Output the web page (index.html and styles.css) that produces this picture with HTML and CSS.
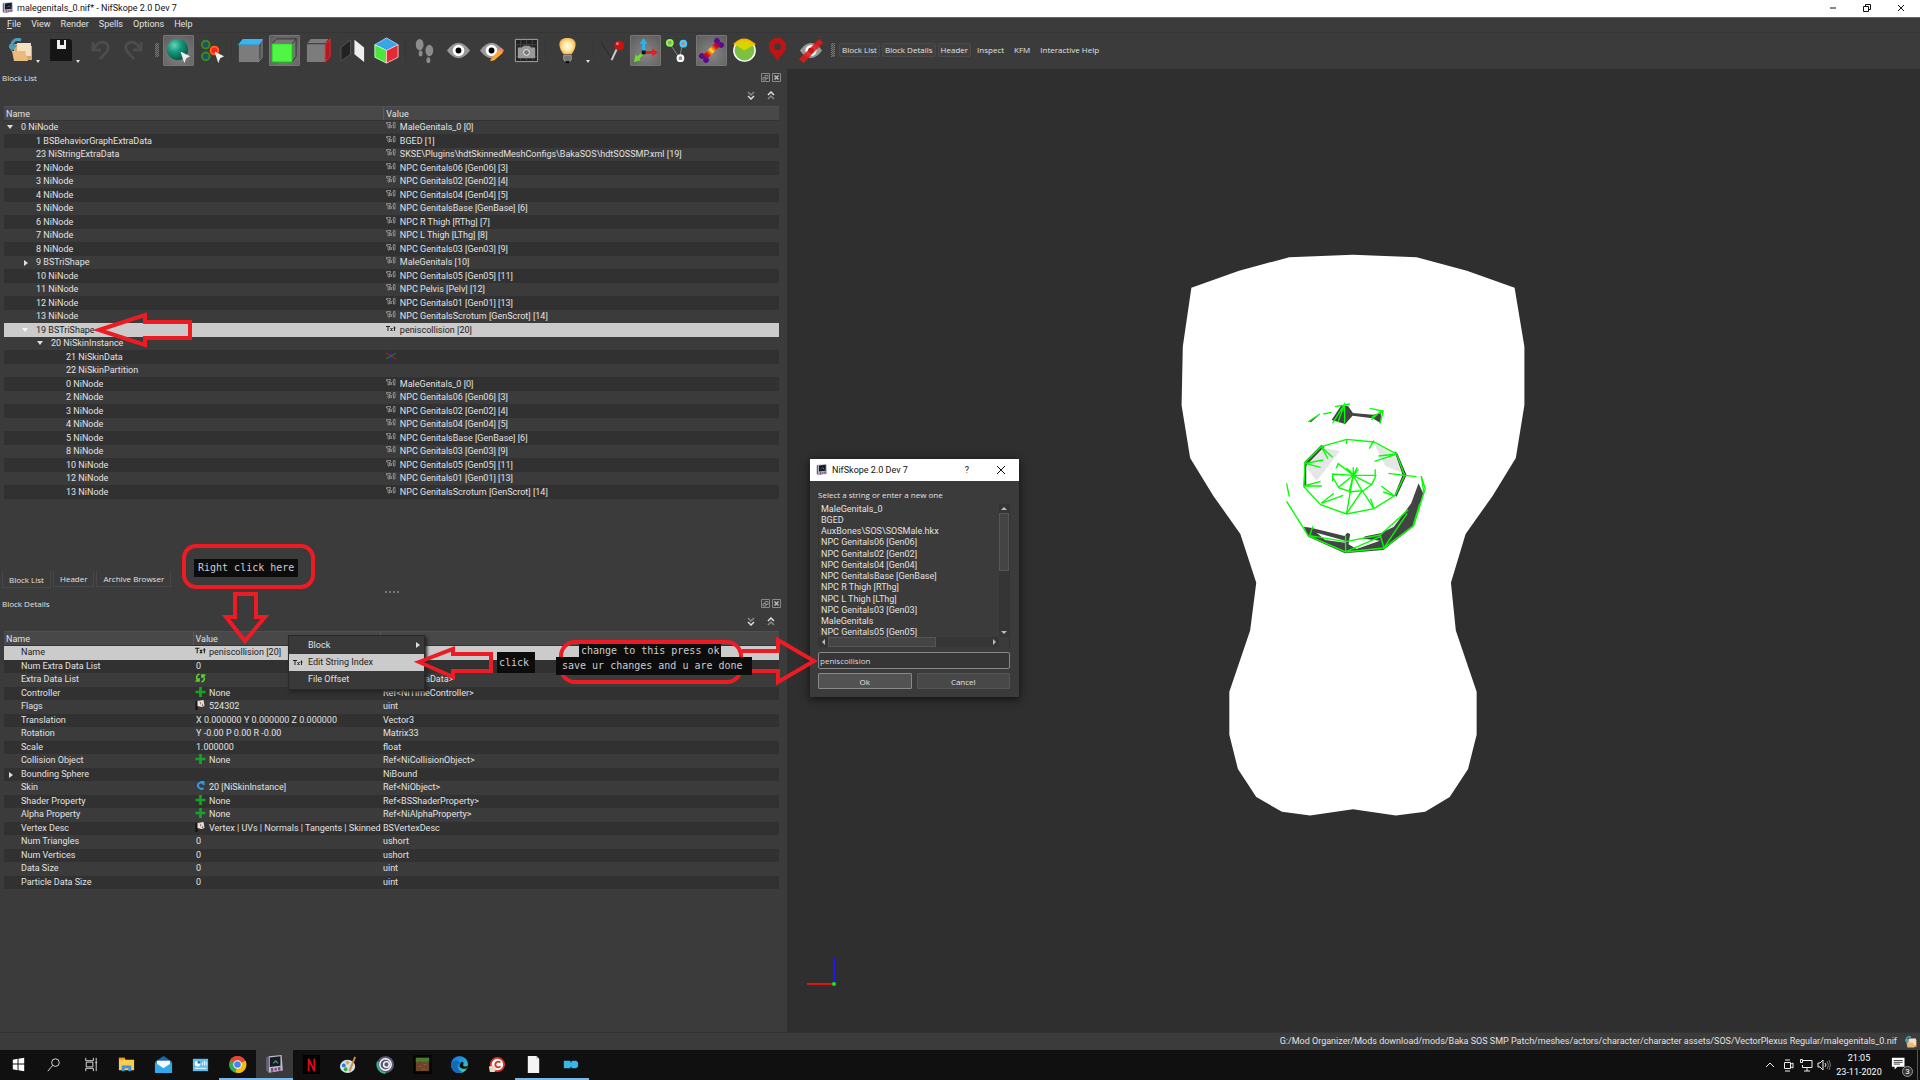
FILE: index.html
```html
<!DOCTYPE html>
<html lang="en">
<head>
<meta charset="utf-8">
<title>NifSkope 2.0 Dev 7</title>
<link rel="stylesheet" href="styles.css">
</head>
<body>
<svg class="defs" aria-hidden="true">
  <defs>
    <radialGradient id="ball" cx=".35" cy=".3" r=".8"><stop offset="0" stop-color="#6fd0b4"/><stop offset=".4" stop-color="#159a7d"/><stop offset="1" stop-color="#034a3b"/></radialGradient>
    <radialGradient id="glow"><stop offset="0" stop-color="#fffbe8"/><stop offset=".6" stop-color="#ffe4a0"/><stop offset="1" stop-color="#f3b64c"/></radialGradient>
    <linearGradient id="heat"><stop offset="0" stop-color="#5b0a8a"/><stop offset=".25" stop-color="#e01010"/><stop offset=".5" stop-color="#ffe020"/><stop offset=".75" stop-color="#e01010"/><stop offset="1" stop-color="#5b0a8a"/></linearGradient>
    <linearGradient id="edge" x2="1" y2="1"><stop offset="0" stop-color="#1b6fd0"/><stop offset=".5" stop-color="#1f9fe0"/><stop offset="1" stop-color="#5fe08a"/></linearGradient>
  </defs>
  <symbol id="txt" viewBox="0 0 10 8"><path d="M0 1.500h4M2 1.500V6M4.500 3l2 3M6.500 3l-2 3M8.500 1.500V6M7.500 3h2" fill="none" stroke="currentColor"/></symbol>
  <symbol id="txt-o" viewBox="0 0 10 8"><path d="M.5.5h4v1.500h-1v4h-1.500v-4H.5zM4 3l2 3M6 3L4.500 6M6.500 2.500h1v-2H9v2h.5M9 3v3H7.500V3" fill="none" stroke="#9a9a9a" stroke-width=".8"/></symbol>
  <symbol id="plus" viewBox="0 0 11 11"><path d="M4 0h3v4h4v3H7v4H4V7H0V4h4z" fill="#12a522"/></symbol>
  <symbol id="flag" viewBox="0 0 10 10"><path d="M1 1v9" stroke="#111" stroke-width="2"/><path d="M2 1l6-1 1 6-3 1-4-1z" fill="#e8e4e0"/><path d="M4 1l2 2-1 2zM7 3l1 3H6z" fill="#a5746a"/></symbol>
  <symbol id="cycle" viewBox="0 0 10 10"><path d="M4 1C1 2 0 5 2.500 7.500M0 8h3.500V5M6 9c3-1 4-4 1.500-6.500M10 2H6.500v3" fill="none" stroke="#5ed32e" stroke-width="1.600"/></symbol>
  <symbol id="link" viewBox="0 0 10 10"><path d="M7 2C3 0 1 5 4 7c2 2 4 0 4 0M5 1h3v3" fill="none" stroke="#2e9ce0" stroke-width="2"/></symbol>
  <symbol id="app" viewBox="0 0 16 16"><path d="M3 1l11-1 1 13-12 2z" fill="#bdb8cf"/><path d="M1 2l2-1v14l-2-2z" fill="#68627f"/><path d="M4 2l9-1v8l-9 1z" fill="#151c22"/><path d="M7 7l2-2 2 2" stroke="#3fae60" fill="none"/><path d="M5 11h2v3H5zM8 11h2v2H8zM11 10h2v3h-2z" fill="#7a4a78"/></symbol>
  <symbol id="cursor" viewBox="0 0 10 12"><path d="M0 0l10 5-4 2-2 5z" fill="#eee"/></symbol>
  <symbol id="folder" viewBox="0 0 24 24"><path d="M5 6h7l2 2h9v14H5z" fill="#d9a866"/><path d="M8 5h14v13H8z" fill="#f2dfc4"/><path d="M3 13h13l3 10H5z" fill="#e9bb7c"/><path d="M12 2C6 0 2 4 3 9M0 7l3 4 4-4" stroke="#4a9fb8" stroke-width="3" fill="none"/></symbol>
  <symbol id="eye" viewBox="0 0 24 18"><path d="M0 9Q12-7 24 9 12 25 0 9z" fill="#999"/><circle cx="12" cy="9" r="6" fill="#fff"/><circle cx="12" cy="9" r="3" fill="#000"/></symbol>
  <symbol id="float" viewBox="0 0 9 9"><path d="M.5.5h8v8h-8zM4 2.500h3v3H4zM2 4.500h3v2.500H2z" fill="none" stroke="#888"/></symbol>
  <symbol id="close" viewBox="0 0 9 9"><path d="M.5.5h8v8h-8z" fill="none" stroke="#888"/><path d="M2.500 2.500l4 4M6.500 2.500l-4 4" stroke="#bbb" stroke-width="1.500"/></symbol>
  <symbol id="up2" viewBox="0 0 8 9"><path d="M1 4l3-3 3 3" fill="none" stroke="#ddd" stroke-width="1.500"/><path d="M1 8l3-3 3 3" fill="none" stroke="#888" stroke-width="1.500"/></symbol>
  <symbol id="down2" viewBox="0 0 8 9"><path d="M1 1l3 3 3-3" fill="none" stroke="#888" stroke-width="1.500"/><path d="M1 5l3 3 3-3" fill="none" stroke="#ddd" stroke-width="1.500"/></symbol>
</svg>

<header class="titlebar">
  <svg class="i12"><use href="#app"/></svg><h1>malegenitals_0.nif* - NifSkope 2.0 Dev 7</h1>
  <div class="window-buttons">
    <button aria-label="Minimize"><svg viewBox="0 0 8 8"><path d="M1 4h6" stroke="#111"/></svg></button>
    <button aria-label="Restore"><svg viewBox="0 0 8 8"><path d="M.5 2.500h5v5h-5zM2.500 2V.5h5v5H6" fill="none" stroke="#111"/></svg></button>
    <button aria-label="Close"><svg viewBox="0 0 8 8"><path d="M1 1l6 6M7 1L1 7" stroke="#111"/></svg></button>
  </div>
</header>
<nav class="menubar">
  <button><u>F</u>ile</button><button>View</button><button>Render</button><button>Spells</button><button>Options</button><button>Help</button>
</nav>
<div class="toolbar" role="toolbar">
  <div class="group files">
    <button aria-label="Open"><svg class="i24"><use href="#folder"/></svg><i class="drop"></i></button>
    <button aria-label="Save"><svg class="i24" viewBox="0 0 24 24"><path d="M1 1h20l2 2v20H1z" fill="#151515"/><path d="M8 2h9v9H8z" fill="#eee"/><path d="M11 2h4v5h-4z" fill="#151515"/></svg><i class="drop"></i></button>
    <button aria-label="Undo"><svg class="i24" viewBox="0 0 24 24"><path d="M4 4v8h8M5 11C9 1 21 3 19 11c-1 4-5 6-8 10" fill="none" stroke="#4c4c4c" stroke-width="3"/></svg></button>
    <button aria-label="Redo"><svg class="i24" viewBox="0 0 24 24"><path d="M20 4v8h-8M19 11C15 1 3 3 5 11c1 4 5 6 8 10" fill="none" stroke="#4c4c4c" stroke-width="3"/></svg></button>
  </div>
  <i class="grip"></i>
  <div class="group">
    <button class="on" aria-label="Select object"><svg viewBox="0 0 30 30"><circle cx="14" cy="14" r="11" fill="url(#ball)"/><use href="#cursor" x="17" y="16" width="10" height="12"/></svg></button>
    <button aria-label="Select vertex"><svg viewBox="0 0 30 30"><g fill="#1d5560" stroke="#3b8c1c" stroke-width="2"><circle cx="8" cy="9" r="4"/><circle cx="8" cy="21" r="4"/></g><circle cx="17" cy="15" r="4" fill="#f22" stroke="#f62" stroke-width="2"/><use href="#cursor" x="17" y="16" width="10" height="12"/></svg></button>
    <i class="sep"></i>
    <button aria-label="Top view"><svg viewBox="0 0 30 30"><path d="M3 9h20v18H3z" fill="#7c7c7c"/><path d="M23 9l4-5v18l-4 5z" fill="#555" stroke="#888"/><path d="M2 9l5-6h21l-4 6z" fill="#38b5f5"/></svg></button>
    <button class="on" aria-label="Front view"><svg viewBox="0 0 30 30"><path d="M2 8l5-5h20v18l-4 6" fill="#777" stroke="#333"/><path d="M2 8h21v19H2z" fill="#4ff644" stroke="#19b51c"/><path d="M23 8l4-5" stroke="#333"/></svg></button>
    <button aria-label="Side view"><svg viewBox="0 0 30 30"><path d="M3 8l4-5h19l-4 5v19H3z" fill="#7c7c7c"/><path d="M3 8h19l4-5" fill="none" stroke="#333"/><path d="M22 9l5-6v18l-5 6z" fill="#b51822" stroke="#f22"/></svg></button>
    <button aria-label="Flip view"><svg viewBox="0 0 30 30"><path d="M3 12l10-8v15L3 26z" fill="#222" stroke="#555"/><path d="M17 4l10 8v15l-10-8z" fill="#eee"/></svg></button>
    <button aria-label="Perspective"><svg viewBox="0 0 30 30"><path d="M3 9l12-7 12 7-12 6z" fill="#38a5e5" stroke="#9cf"/><path d="M3 9l12 6v13L3 22z" fill="#4ce63c" stroke="#bfb"/><path d="M27 9l-12 6v13l12-6z" fill="#e52a36" stroke="#fbb"/></svg></button>
    <i class="sep"></i>
    <button aria-label="Walk"><svg viewBox="0 0 30 30" fill="#8c8c8c"><ellipse cx="10" cy="9" rx="4" ry="6"/><ellipse cx="11" cy="18" rx="2" ry="3"/><ellipse cx="20" cy="15" rx="4" ry="6"/><ellipse cx="19" cy="25" rx="2" ry="3"/></svg></button>
    <button aria-label="Show"><svg viewBox="0 0 30 30"><use href="#eye" x="3" y="6" width="24" height="18"/></svg></button>
    <button aria-label="Edit view"><svg viewBox="0 0 30 30"><use href="#eye" x="2" y="6" width="24" height="18"/><path d="M13 24l9-10 4 3-9 8-4 1z" fill="#ffa62b"/><path d="M21 14l3-2 3 3-2 2z" fill="#f48080"/></svg></button>
    <button aria-label="Screenshot"><svg viewBox="0 0 30 30"><path d="M3.500 3.500h23v23h-23z" fill="#222" stroke="#aaa"/><path d="M9 4v22M15 4v22M21 4v22M4 9h22M4 21h22" stroke="#444"/><path d="M6 12h4l2-2h6l2 2h4v11H6z" fill="#999"/><circle cx="15" cy="17" r="3" fill="#777" stroke="#eee"/></svg></button>
    <i class="sep"></i>
    <button class="wide" aria-label="Lighting"><svg viewBox="0 0 30 30"><path d="M15 2c12 0 9 11 4 17h-8C6 13 3 2 15 2z" fill="url(#glow)"/><path d="M11 20h8v4l-2 3h-4l-2-3z" fill="#777" stroke="#999"/><path d="M13 26h4v2h-4z" fill="#000"/></svg><i class="drop"></i></button>
    <i class="sep"></i>
  </div>
  <div class="group tight">
    <button aria-label="Normals"><svg viewBox="0 0 30 30"><path d="M3 6l11 18" stroke="#2a2a2a"/><path d="M14 25l8-17" stroke="#ccc" stroke-width="2"/><circle cx="22" cy="10" r="5" fill="#c11"/><circle cx="20" cy="8" r="1.500" fill="#e77"/></svg></button>
    <button class="on" aria-label="Axes"><svg viewBox="0 0 30 30"><path d="M13 17V6" stroke="#2bb3f0" stroke-width="3"/><path d="M9 8l4-6 4 6z" fill="#2bb3f0"/><path d="M13 17h10" stroke="#e02020" stroke-width="3"/><path d="M22 13l6 4-6 4z" fill="#e02020"/><path d="M13 17l-7 7" stroke="#6fdc30" stroke-width="3"/><path d="M3 27l2-8 5 6z" fill="#6fdc30"/><path d="M11 15h4v4h-4z" fill="#111"/></svg></button>
    <button aria-label="Nodes"><svg viewBox="0 0 30 30"><path d="M6 8l10 15 3-14" fill="none" stroke="#888"/><g fill="#999" stroke-width="2"><circle cx="6" cy="7" r="3" stroke="#8f4"/><circle cx="20" cy="8" r="3" stroke="#4cf"/><circle cx="17" cy="23" r="3" stroke="#fff"/></g></svg></button>
    <button class="on" aria-label="Skeleton"><svg viewBox="0 0 30 30"><g transform="rotate(-45 15 15)"><g fill="#5b0a8a"><circle cx="4" cy="12" r="3"/><circle cx="4" cy="18" r="3"/><circle cx="26" cy="12" r="3"/><circle cx="26" cy="18" r="3"/></g><path d="M4 12h22v6H4z" fill="url(#heat)"/></g></svg></button>
    <button aria-label="Constraints"><svg viewBox="0 0 30 30"><circle cx="15" cy="15" r="11" fill="#7cc142" stroke="#fff" stroke-width="1.500"/><path d="M15 15L5 9q10-10 20 0z" fill="#d8d400"/><path d="M4 9q10-11 22 0" fill="none" stroke="#fa0" stroke-width="2"/></svg></button>
    <button aria-label="Markers"><svg viewBox="0 0 30 30"><path d="M15 27C13 19 6 17 6 10.500a9 8.500 0 0 1 18 0C24 17 17 19 15 27z" fill="#c11313"/><circle cx="15" cy="11" r="3.500" fill="#3b3b3b"/></svg></button>
    <button aria-label="Hidden"><svg viewBox="0 0 30 30"><use href="#eye" x="4" y="6" width="23" height="18"/><path d="M3 24L24 3l4 4L8 28z" fill="#e31a1a" opacity=".9"/></svg></button>
  </div>
  <i class="grip"></i>
  <div class="views">
    <button class="box">Block List</button><button class="box">Block Details</button><button class="box">Header</button><button>Inspect</button><button>KFM</button><button>Interactive Help</button>
  </div>
</div>

<main>
  <div class="docks">
    <section class="dock list">
      <div class="dock-title"><h2>Block List</h2><button aria-label="Float"><svg><use href="#float"/></svg></button><button aria-label="Close"><svg><use href="#close"/></svg></button></div>
      <div class="dock-tools"><button aria-label="Expand"><svg><use href="#down2"/></svg></button><button aria-label="Collapse"><svg><use href="#up2"/></svg></button></div>
      <table>
        <colgroup><col class="c-half"><col></colgroup>
        <thead><tr><th>Name</th><th>Value</th></tr></thead>
        <tbody>
          <tr><td class="l0 open">0 NiNode</td><td><svg><use href="#txt-o"/></svg>MaleGenitals_0 [0]</td></tr>
          <tr><td class="l1">1 BSBehaviorGraphExtraData</td><td><svg><use href="#txt-o"/></svg>BGED [1]</td></tr>
          <tr><td class="l1">23 NiStringExtraData</td><td><svg><use href="#txt-o"/></svg>SKSE\Plugins\hdtSkinnedMeshConfigs\BakaSOS\hdtSOSSMP.xml [19]</td></tr>
          <tr><td class="l1">2 NiNode</td><td><svg><use href="#txt-o"/></svg>NPC Genitals06 [Gen06] [3]</td></tr>
          <tr><td class="l1">3 NiNode</td><td><svg><use href="#txt-o"/></svg>NPC Genitals02 [Gen02] [4]</td></tr>
          <tr><td class="l1">4 NiNode</td><td><svg><use href="#txt-o"/></svg>NPC Genitals04 [Gen04] [5]</td></tr>
          <tr><td class="l1">5 NiNode</td><td><svg><use href="#txt-o"/></svg>NPC GenitalsBase [GenBase] [6]</td></tr>
          <tr><td class="l1">6 NiNode</td><td><svg><use href="#txt-o"/></svg>NPC R Thigh [RThg] [7]</td></tr>
          <tr><td class="l1">7 NiNode</td><td><svg><use href="#txt-o"/></svg>NPC L Thigh [LThg] [8]</td></tr>
          <tr><td class="l1">8 NiNode</td><td><svg><use href="#txt-o"/></svg>NPC Genitals03 [Gen03] [9]</td></tr>
          <tr><td class="l1 shut">9 BSTriShape</td><td><svg><use href="#txt-o"/></svg>MaleGenitals [10]</td></tr>
          <tr><td class="l1">10 NiNode</td><td><svg><use href="#txt-o"/></svg>NPC Genitals05 [Gen05] [11]</td></tr>
          <tr><td class="l1">11 NiNode</td><td><svg><use href="#txt-o"/></svg>NPC Pelvis [Pelv] [12]</td></tr>
          <tr><td class="l1">12 NiNode</td><td><svg><use href="#txt-o"/></svg>NPC Genitals01 [Gen01] [13]</td></tr>
          <tr><td class="l1">13 NiNode</td><td><svg><use href="#txt-o"/></svg>NPC GenitalsScrotum [GenScrot] [14]</td></tr>
          <tr class="sel"><td class="l1 open">19 BSTriShape</td><td><svg><use href="#txt"/></svg>peniscollision [20]</td></tr>
          <tr><td class="l2 open">20 NiSkinInstance</td><td></td></tr>
          <tr><td class="l3">21 NiSkinData</td><td><svg viewBox="0 0 10 10"><path d="M5 0v10" stroke="#22c"/><path d="M0 2l10 6" stroke="#a22"/><path d="M0 8l10-6" stroke="#282"/></svg></td></tr>
          <tr><td class="l3">22 NiSkinPartition</td><td></td></tr>
          <tr><td class="l3">0 NiNode</td><td><svg><use href="#txt-o"/></svg>MaleGenitals_0 [0]</td></tr>
          <tr><td class="l3">2 NiNode</td><td><svg><use href="#txt-o"/></svg>NPC Genitals06 [Gen06] [3]</td></tr>
          <tr><td class="l3">3 NiNode</td><td><svg><use href="#txt-o"/></svg>NPC Genitals02 [Gen02] [4]</td></tr>
          <tr><td class="l3">4 NiNode</td><td><svg><use href="#txt-o"/></svg>NPC Genitals04 [Gen04] [5]</td></tr>
          <tr><td class="l3">5 NiNode</td><td><svg><use href="#txt-o"/></svg>NPC GenitalsBase [GenBase] [6]</td></tr>
          <tr><td class="l3">8 NiNode</td><td><svg><use href="#txt-o"/></svg>NPC Genitals03 [Gen03] [9]</td></tr>
          <tr><td class="l3">10 NiNode</td><td><svg><use href="#txt-o"/></svg>NPC Genitals05 [Gen05] [11]</td></tr>
          <tr><td class="l3">12 NiNode</td><td><svg><use href="#txt-o"/></svg>NPC Genitals01 [Gen01] [13]</td></tr>
          <tr><td class="l3">13 NiNode</td><td><svg><use href="#txt-o"/></svg>NPC GenitalsScrotum [GenScrot] [14]</td></tr>
        </tbody>
      </table>
      <div class="tabs"><button class="current">Block List</button><button>Header</button><button>Archive Browser</button></div>
      <i class="splitter"></i>
    </section>
    <section class="dock details">
      <div class="dock-title"><h2>Block Details</h2><button aria-label="Float"><svg><use href="#float"/></svg></button><button aria-label="Close"><svg><use href="#close"/></svg></button></div>
      <div class="dock-tools"><button aria-label="Expand"><svg><use href="#down2"/></svg></button><button aria-label="Collapse"><svg><use href="#up2"/></svg></button></div>
      <table>
        <colgroup><col class="c-name"><col class="c-value"><col></colgroup>
        <thead><tr><th>Name</th><th>Value</th><th>Type</th></tr></thead>
        <tbody>
          <tr class="sel"><td class="l0">Name</td><td><svg><use href="#txt"/></svg>peniscollision [20]</td><td>string</td></tr>
          <tr><td class="l0">Num Extra Data List</td><td>0</td><td>uint</td></tr>
          <tr><td class="l0">Extra Data List</td><td><svg><use href="#cycle"/></svg></td><td>Ref&lt;NiExtraData&gt;</td></tr>
          <tr><td class="l0">Controller</td><td><svg><use href="#plus"/></svg>None</td><td>Ref&lt;NiTimeController&gt;</td></tr>
          <tr><td class="l0">Flags</td><td><svg><use href="#flag"/></svg>524302</td><td>uint</td></tr>
          <tr><td class="l0">Translation</td><td>X 0.000000 Y 0.000000 Z 0.000000</td><td>Vector3</td></tr>
          <tr><td class="l0">Rotation</td><td>Y -0.00 P 0.00 R -0.00</td><td>Matrix33</td></tr>
          <tr><td class="l0">Scale</td><td>1.000000</td><td>float</td></tr>
          <tr><td class="l0">Collision Object</td><td><svg><use href="#plus"/></svg>None</td><td>Ref&lt;NiCollisionObject&gt;</td></tr>
          <tr><td class="l0 shut">Bounding Sphere</td><td></td><td>NiBound</td></tr>
          <tr><td class="l0">Skin</td><td><svg><use href="#link"/></svg>20 [NiSkinInstance]</td><td>Ref&lt;NiObject&gt;</td></tr>
          <tr><td class="l0">Shader Property</td><td><svg><use href="#plus"/></svg>None</td><td>Ref&lt;BSShaderProperty&gt;</td></tr>
          <tr><td class="l0">Alpha Property</td><td><svg><use href="#plus"/></svg>None</td><td>Ref&lt;NiAlphaProperty&gt;</td></tr>
          <tr><td class="l0">Vertex Desc</td><td><svg><use href="#flag"/></svg>Vertex | UVs | Normals | Tangents | Skinned</td><td>BSVertexDesc</td></tr>
          <tr><td class="l0">Num Triangles</td><td>0</td><td>ushort</td></tr>
          <tr><td class="l0">Num Vertices</td><td>0</td><td>ushort</td></tr>
          <tr><td class="l0">Data Size</td><td>0</td><td>uint</td></tr>
          <tr><td class="l0">Particle Data Size</td><td>0</td><td>uint</td></tr>
        </tbody>
      </table>
    </section>
  </div>
  <div class="viewport">
    <svg viewBox="787 69 1133 963" aria-label="Mesh preview">
      <path transform="scale(1.2245)" fill="#fff" d="M973 235l39-14 41-11 52-2 52 2 41 11 39 14 8 48v48l-7 43-19 31-22 31-12 40 4 39 17 50v35l-7 28-15 23-20 12-24 3-35-5-35 5-23-3-21-12-15-23-7-28v-35l17-50 5-39-13-40-22-31-19-31-7-43 1-48z"/>
      <g transform="translate(1260 390) scale(.3333)">
        <path d="M134 215l50-50 10 6-55 60v55l-8 4zM404 185l8 4 28 66-30 65-6-5 24-60zM215 90l30-45 20 4 14 20 60 5 24-4v30l-25-15-60-8-22 25zM148 93l30-18-25 22zM132 410l24 4 98 24 8-10 16 8 24 6 60-12 40-20 52-70 22-60 14 30-30 100-90 70-115 10-110-50z" fill="#444"/>
        <path d="M140 225l50-52 50 10-70 90-30-40zM342 160l60 28 24 60-50-20z" fill="#e6e6e6"/>
        <path d="M170 428l86 24v6l-60-8zM272 424l48 6-10 16 50 6-70 25-24-14z" fill="#fff"/>
        <g fill="none" stroke="#0f0" stroke-width="4">
          <path d="M184 170l76-22 82 8 68 36 24 64-28 60-64 40-82 16-78-28-50-54 3-72zM260 370l20-114M342 356l-36-56"/>
          <path d="M280 256l-45-35-6 14M280 256l-62-4v22M280 256l-44 36-16-28M280 256l-12 48-34-12M280 256l26 46-40 4M280 256l54 28-26 20M280 256h70M346 238v24l-12 24M280 256l-20-22M280 256l12-24M280 256v-24M280 256l16-18M280 256l-12-16M260 370l48-70"/>
          <path d="M184 170l34 32M184 170l20 36M136 220l46 12M136 220l54-10M132 288l50-14M132 288l54 0M184 340l38-30M184 340l66-24M260 148v14M342 152l-14 24M342 152l-8 12M410 192l-66 22M410 192l-54 6M434 256l-48-6M434 256l36 4M404 318l-40-30M404 318l-34-12M342 356l-10-30"/>
          <path d="M80 280l8 40M80 334l65 103 112 49 115-12 90-68 34-110-12-38 8 50M150 437l107 18 104-20M257 486v-50M361 435l11 39M361 435l84-76M257 486l104-46M372 474l70-104M480 340l-20 65M149 437l10-28"/>
          <path d="M145 95l35-23M190 72l25-5M218 100l36-58v56M254 42l-20 55M225 50l45-8M330 55l40 8-10 38M335 82l35-20M335 90l20-20"/>
        </g>
      </g>
      <path d="M834 957v27" stroke="#1a1af0" stroke-width="2"/><path d="M807 984h26" stroke="#e01515" stroke-width="2"/><circle cx="834" cy="984" r="2" fill="#1e1"/>
    </svg>
  </div>
</main>
<footer class="status"><span>G:/Mod Organizer/Mods download/mods/Baka SOS SMP Patch/meshes/actors/character/character assets/SOS/VectorPlexus Regular/malegenitals_0.nif</span><svg class="i12"><use href="#folder"/></svg></footer>

<nav class="taskbar">
  <button aria-label="Start"><svg viewBox="0 0 20 20"><path d="M4 5l5-1v5H4zM10 4l6-1v6h-6zM4 10h5v6l-5-1zM10 10h6v7l-6-1z" fill="#fff"/></svg></button>
  <button aria-label="Search"><svg viewBox="0 0 20 20"><circle cx="11" cy="8" r="4" fill="none" stroke="#ddd"/><path d="M8 11l-5 6" stroke="#ddd"/></svg></button>
  <button aria-label="Task view"><svg viewBox="0 0 20 20"><path d="M5 3v3h8V3M5 17v-3h8v3M5.500 7.500h7v5h-7zM16 3v14M15 8h2" fill="none" stroke="#ddd"/></svg></button>
  <button aria-label="Explorer"><svg viewBox="0 0 20 20"><path d="M2 3h6l1 2h9v11H2z" fill="#ffcb4c"/><path d="M2 3h6v2H2z" fill="#e29d25"/><path d="M5 17v-6h10v6h-3v-3H8v3z" fill="#3a94df"/></svg></button>
  <button aria-label="Mail"><svg viewBox="0 0 20 20"><path d="M1 7l9-6 9 6v12H1z" fill="#1469b5"/><path d="M3 6h14v8H3z" fill="#f5f9ff"/><path d="M1 8l9 6 9-6v11H1z" fill="#35a8ea"/></svg></button>
  <button aria-label="Control panel"><svg viewBox="0 0 20 20"><path d="M2 4h16v13H2z" fill="#60bdf3"/><circle cx="7" cy="9" r="3" fill="#fff"/><path d="M7 9V6a3 3 0 0 1 3 3z" fill="#1668b0"/><path d="M12 11V8M14 11V6M16 11V7M4 14h12" stroke="#fff"/></svg></button>
  <button class="run" aria-label="Chrome"><svg viewBox="0 0 20 20"><circle cx="10" cy="10" r="9" fill="#38a852"/><path d="M10 10L2 6a9 9 0 0 1 16 0z" fill="#e94335"/><path d="M10 10l8.500-4A9 9 0 0 1 10 19l-2-1z" fill="#fabc05"/><circle cx="10" cy="10" r="4.500" fill="#fff"/><circle cx="10" cy="10" r="3.500" fill="#4285f4"/></svg></button>
  <button class="run active" aria-label="NifSkope"><svg><use href="#app"/></svg></button>
  <button aria-label="Netflix"><svg viewBox="0 0 20 20"><path d="M1 0h18v20H1z" fill="#000"/><path d="M7 17V4l6 13V4" fill="none" stroke="#d8091a" stroke-width="2"/></svg></button>
  <button aria-label="Paint"><svg viewBox="0 0 20 20"><ellipse cx="9" cy="12" rx="8" ry="7" fill="#cfe3ee"/><circle cx="5" cy="11" r="2" fill="#37c"/><circle cx="9" cy="8" r="2" fill="#da4"/><circle cx="7" cy="15" r="2" fill="#3a4"/><path d="M11 17l6-15" stroke="#d28a3c" stroke-width="2"/></svg></button>
  <button aria-label="Ubisoft"><svg viewBox="0 0 20 20"><circle cx="10" cy="10" r="9" fill="#5a5a78"/><path d="M2 7a9 9 0 0 0 8 12" fill="none" stroke="#3b8" stroke-width="2"/><circle cx="10" cy="10" r="6" fill="none" stroke="#fff" stroke-width="1.500"/><circle cx="11" cy="10" r="3" fill="none" stroke="#fff" stroke-width="1.500"/></svg></button>
  <button aria-label="Minecraft"><svg viewBox="0 0 20 20"><path d="M0 0h20v20H0z" fill="#050505"/><path d="M3 3h14v14H3z" fill="#6b442a"/><path d="M3 3h14v4l-2-1-1 3-2-3-2 2-3-2-2 2-2-1z" fill="#4c7c2e"/><path d="M6 12h3M11 10h3M9 15h4" stroke="#8a6040"/></svg></button>
  <button aria-label="Edge"><svg viewBox="0 0 20 20"><circle cx="10" cy="10" r="9" fill="url(#edge)"/><path d="M1 10c1-5 9-6 10-1-4 0-4 7 2 9-6 3-12-1-12-8z" fill="#1768b8"/><path d="M11 9c-3 3 1 7 7 5l1-3c-3 2-6 1-5-1 1-3-2-4-3-1z" fill="#101010"/></svg></button>
  <button aria-label="CCleaner"><svg viewBox="0 0 20 20"><circle cx="11" cy="10" r="7" fill="#fff" stroke="#d8352a" stroke-width="2"/><path d="M14 8a3 3 0 1 0 0 4" fill="none" stroke="#d8352a" stroke-width="2"/><path d="M2 12l5-1 3 3-2 4H3z" fill="#f0d6c0"/></svg></button>
  <button class="run" aria-label="Notepad"><svg viewBox="0 0 20 20"><path d="M4 1h9l3 3v15H4z" fill="#f4f4f4"/><path d="M13 1v3h3z" fill="#bbb"/></svg></button>
  <button class="run" aria-label="Mod manager"><svg viewBox="0 0 20 20"><path d="M3 6h7v2l2-2h4l2 2v4l-2 2h-4l-2-2v2H3z" fill="#37b6ec"/></svg></button>
  <div class="tray">
    <svg viewBox="0 0 18 18"><path d="M5 11l4-4 4 4" fill="none" stroke="#eee"/></svg>
    <svg viewBox="0 0 18 18"><path d="M5.500 6.500h6v6h-6zM12 8l2-1v5l-2-1M6 4h5M6 15h5" fill="none" stroke="#eee"/></svg>
    <svg viewBox="0 0 18 18"><path d="M6 4.500h9v7H5.500V9M3.500 3.500h2v3h-2zM10 12v3M7 15h6" fill="none" stroke="#eee"/></svg>
    <svg viewBox="0 0 18 18"><path d="M3 7h2l3-3v10l-3-3H3zM10 7q2 2 0 4" fill="none" stroke="#eee"/><path d="M12 5q3 4 0 8M14 4q3 5 0 10" fill="none" stroke="#777"/></svg>
    <time><span>21:05</span><span>23-11-2020</span></time>
    <button class="notes" aria-label="Notifications"><svg viewBox="0 0 20 20"><path d="M1 2h14v10H7l-3 3v-3H1z" fill="#fff"/><path d="M3 5h10M3 7h10M3 9h7" stroke="#333"/></svg><b>3</b></button>
    <i class="desk"></i>
  </div>
</nav>

<div class="context" role="menu">
  <button role="menuitem" class="more">Block</button>
  <button role="menuitem" class="hot"><svg><use href="#txt"/></svg>Edit String Index</button>
  <button role="menuitem">File Offset</button>
</div>

<div class="dialog" role="dialog">
  <div class="dialog-title"><svg class="i12"><use href="#app"/></svg><h2>NifSkope 2.0 Dev 7</h2><button aria-label="Help">?</button><button aria-label="Close"><svg viewBox="0 0 8 8"><path d="M0 0l8 8M8 0L0 8" stroke="#111"/></svg></button></div>
  <form>
    <label for="entry">Select a string or enter a new one</label>
    <div class="strings">
      <ul><li>MaleGenitals_0</li><li>BGED</li><li>AuxBones\SOS\SOSMale.hkx</li><li>NPC Genitals06 [Gen06]</li><li>NPC Genitals02 [Gen02]</li><li>NPC Genitals04 [Gen04]</li><li>NPC GenitalsBase [GenBase]</li><li>NPC R Thigh [RThg]</li><li>NPC L Thigh [LThg]</li><li>NPC Genitals03 [Gen03]</li><li>MaleGenitals</li><li>NPC Genitals05 [Gen05]</li></ul>
      <div class="vbar"><i class="tri up"></i><i class="thumb"></i><i class="tri down"></i></div>
      <div class="hbar"><i class="tri left"></i><i class="thumb"></i><i class="tri right"></i></div>
    </div>
    <input id="entry" type="text" value="peniscollision">
    <div class="actions"><button type="button" class="default">Ok</button><button type="button">Cancel</button></div>
  </form>
</div>

<svg class="marks" viewBox="0 0 1920 1080" aria-hidden="true">
  <g fill="none" stroke="#ed1c24" stroke-width="4">
    <path d="M99 330l46-15v7h45v16h-45v7z"/>
    <rect x="184" y="546" width="129" height="41" rx="12"/>
    <path d="M235 594h21v23h9l-20 24-19-24h9z"/>
    <path d="M419 662l34-13v5h38v17h-38v6z"/>
    <rect x="561" y="642" width="180" height="40" rx="14"/>
    <path d="M742 651h36v-11l36 21-36 21v-11h-36"/>
  </g>
</svg>
<p class="note n1">Right click here</p>
<p class="note n2">click</p>
<p class="note n3">change to this press ok</p>
<p class="note n4">save ur changes and u are done</p>
</body>
</html>
```

FILE: styles.css
```css
* { box-sizing: border-box; }
body {
  margin: 0; min-height: 100vh; display: flex; flex-direction: column; position: relative;
  background: #3b3b3b; color: #e2e2e2; font: 9px/13px Roboto, "Noto Sans", sans-serif; overflow: hidden;
}
h1, h2, p, ul { margin: 0; padding: 0; font-size: inherit; font-weight: 400; list-style: none; }
button { font: inherit; color: inherit; background: none; border: 0; padding: 0; margin: 0; }
svg { display: block; }
i { font-style: normal; }
.defs { position: absolute; width: 0; height: 0; }
.i12 { width: 12px; height: 12px; }
.i24 { width: 24px; height: 24px; }

.titlebar { display: flex; align-items: center; gap: 3px; height: 17px; padding: 0 2px 1px; background: #fff; color: #111; }
.window-buttons { margin-left: auto; display: flex; }
.window-buttons button { width: 34px; display: grid; place-items: center; }
.window-buttons svg { width: 8px; height: 8px; }

.menubar { display: flex; gap: 10px; height: 15px; padding: 0 7px 1px; border-top: 1px solid #666; }

.toolbar { display: flex; align-items: center; height: 37px; padding-bottom: 2px; border-top: 1px solid #353535; }
.group { display: flex; align-items: center; gap: 3px; }
.tight { gap: 2px; padding: 0 3px; }
.group button { flex: none; width: 31px; height: 31px; border-radius: 1px; }
.group button svg { margin: auto; width: 29px; height: 29px; }
.files { padding-left: 9px; gap: 8px; width: 153px; }
.files button { display: flex; align-items: center; gap: 3px; width: 32px; }
.files button:nth-child(n+3) { width: 24px; }
.group button .i24 { margin: 0; flex: none; width: 24px; height: 24px; }
.on { background: radial-gradient(circle at 50% 60%, #888, #5b5b5b); border: 1px solid #777; }
.group .wide { width: 41px; display: flex; align-items: center; }
.drop { border: 2px solid transparent; border-top: 3px solid #ddd; border-bottom: 0; margin-top: 22px; flex: none; }
.sep { width: 1px; height: 22px; background: #363636; }
.grip { width: 4px; height: 14px; margin: 0 4px 0 2px; background: repeating-conic-gradient(#777 0 25%, #444 0 50%) 0 0 / 2px 2px; }
.views { display: flex; gap: 2px; font-family: "Open Sans", "Noto Sans", sans-serif; font-size: 8px; }
.views button { height: 14px; line-height: 12px; padding: 0 4px; }
.views .box { padding: 0 2px; border: 1px solid #4a4a4a; border-radius: 2px; background: #404040; }

main { flex: 1; display: grid; grid-template-columns: 41% 1fr; }
.viewport { background: #2f2f2f; overflow: hidden; }
.viewport svg { width: 100%; height: 100%; }
.docks { display: flex; flex-direction: column; }
.dock { padding: 0 8px 0 4px; }
.list { display: flex; flex-direction: column; height: 526px; }
.dock-title { display: flex; gap: 2px; height: 16px; align-items: center; margin-right: -2px; }
.dock-title h2 { flex: 1; font-family: "Open Sans", "Noto Sans", sans-serif; font-size: 8px; margin-left: -2px; }
.dock-title svg { width: 9px; height: 9px; }
.dock-tools { display: flex; justify-content: flex-end; gap: 12px; height: 21px; padding: 6px 4px 0 0; }
.dock-tools button { height: 9px; }
.dock-tools svg { width: 8px; height: 9px; }
.details .dock-tools { height: 20px; }
table { width: 100%; table-layout: fixed; border-collapse: collapse; flex: none; }
.c-half { width: 49%; }
.c-name { width: 189px; }
.c-value { width: 187px; }
th { height: 14px; padding: 0 2px; line-height: 12px; text-align: left; font-weight: 400; background: #484848; border-top: 1px solid #505050; border-bottom: 1px solid #333; }
th + th { border-left: 1px solid #5a5a5a; }
td { height: 13px; line-height: 13px; padding: 0 2px; white-space: nowrap; }
tr:nth-child(even) td { height: 14px; background: #313131; }
.details tbody tr:nth-child(odd) td { height: 14px; }
.details tbody tr:nth-child(even) td { height: 13px; }
td svg { display: inline-block; width: 10px; height: 10px; margin-right: 4px; vertical-align: -1px; }
.details td svg { width: 11px; height: 10px; margin: 0 3px 0 -1px; }
.details td { padding-left: 3px; }
tbody tr.sel td { background: #cbcbcb; color: #222; }
.dock td.l0 { padding-left: 17px; }
td.l1 { padding-left: 32px; }
td.l2 { padding-left: 47px; }
td.l3 { padding-left: 62px; }
.open::before, .shut::before { content: ""; display: inline-block; margin: 0 8px 1px -14px; border: 3px solid transparent; }
.open::before { border-top: 4px solid #ddd; border-bottom: 0; }
.shut::before { border-left: 4px solid #ddd; border-right: 0; margin: 0 8px -1px -12px; }
.sel .open::before { border-top-color: #f4f4f4; }
.tabs { display: flex; gap: 2px; margin: auto 0 0 -2px; font-family: "Open Sans", "Noto Sans", sans-serif; font-size: 8px; align-items: flex-start; }
.tabs button { height: 16px; padding: 0 6px; border: 1px solid #484848; border-top: 0; }
.tabs .current { height: 17px; }
.splitter { flex: none; width: 14px; margin: 3px auto 2px; border-top: 2px dotted #777; }

.status { display: flex; justify-content: flex-end; align-items: center; gap: 8px; height: 18px; padding-right: 3px; border-top: 1px solid #333; }

.taskbar { display: flex; height: 30px; background: #101010; }
.taskbar > button { width: 37px; display: grid; place-items: center; border-bottom: 2px solid transparent; }
.taskbar > button:nth-child(-n+3) { width: 36px; }
.taskbar > button svg { width: 19px; height: 19px; }
.taskbar > .run { border-bottom-color: #76b9ed; }
.taskbar > .active { background: #3a3a3a; }
.tray { margin-left: auto; display: flex; align-items: center; }
.tray > svg { width: 18px; height: 18px; }
.tray time { display: flex; flex-direction: column; align-items: center; width: 52px; line-height: 14px; color: #fff; }
.notes { position: relative; width: 32px; height: 24px; padding: 3px 6px; }
.notes svg { width: 18px; height: 18px; }
.notes b { position: absolute; right: 4px; bottom: 0; width: 11px; height: 11px; border-radius: 50%; background: #333; border: 1px solid #999; font-size: 8px; line-height: 9px; color: #fff; font-weight: 400; }
.desk { width: 3px; height: 30px; border-left: 1px solid #555; }

.context { position: absolute; left: 288px; top: 635px; width: 137px; padding: 1px 0; background: #393939; border: 1px solid #2a2a2a; box-shadow: 2px 2px 3px #222; }
.context button { display: block; position: relative; width: 100%; height: 17px; line-height: 15px; padding-left: 19px; text-align: left; }
.context svg { position: absolute; left: 4px; top: 5px; width: 10px; height: 8px; }
.context .hot { background: #cbcbcb; color: #222; }
.more::after { content: ""; position: absolute; right: 4px; top: 5px; border: 3px solid transparent; border-left: 4px solid #ddd; border-right: 0; }

.dialog { position: absolute; left: 810px; top: 459px; width: 209px; background: #3b3b3b; box-shadow: 0 2px 8px #111; }
.dialog-title { display: flex; align-items: center; gap: 4px; height: 22px; padding: 0 3px 0 6px; background: #fff; color: #111; }
.dialog-title h2 { flex: 1; }
.dialog-title button { width: 30px; display: grid; place-items: center; }
.dialog-title button svg { width: 8px; height: 8px; }
.dialog form { padding: 7px 9px 8px 8px; display: flex; flex-direction: column; }
.dialog label { font-family: "Open Sans", "Noto Sans", sans-serif; font-size: 8px; height: 16px; line-height: 13px; }
.strings { display: grid; grid-template: 133px 10px / 1fr 10px; height: 143px; border: 1px solid #333; border-width: 0 1px; }
.strings ul { overflow: hidden; padding-left: 2px; line-height: 11px; }
.strings li { height: 11px; white-space: nowrap; }
.strings li:nth-child(4n) { height: 12px; }
.vbar, .hbar { display: flex; align-items: center; background: #353535; }
.vbar { flex-direction: column; }
.thumb { background: #444; border: 1px solid #555; }
.vbar .thumb { width: 10px; height: 58px; margin-bottom: auto; }
.hbar .thumb { width: 108px; height: 10px; margin-right: auto; }
.tri { margin: 3px; border: 3px solid transparent; }
.up { border-bottom-color: #bbb; border-top: 0; }
.down { border-top-color: #bbb; border-bottom: 0; }
.left { border-right-color: #bbb; border-left: 0; }
.right { border-left-color: #bbb; border-right: 0; }
.dialog input { height: 17px; margin: 5px 0 4px; padding: 0 1px; font-family: "Open Sans", "Noto Sans", sans-serif; font-size: 8px; color: #ddd; background: #363636; border: 1px solid #888; border-radius: 2px; }
.actions { display: flex; gap: 5px; font-family: "Open Sans", "Noto Sans", sans-serif; font-size: 8px; }
.actions button { flex: 1; height: 16px; line-height: 13px; background: #484848; border: 1px solid #555; border-radius: 1px; }
.actions .default { background: #525252; border-color: #888; }

.marks { position: absolute; left: 0; top: 0; width: 1920px; height: 1080px; pointer-events: none; }
.note { position: absolute; background: #0c0c0c; color: #ccc; font: 10px/18px "DejaVu Sans Mono", monospace; white-space: nowrap; }
.n1 { left: 194px; top: 559px; padding: 0 4px; }
.n2 { left: 497px; top: 652px; padding: 2px 6px 1px 2px; }
.n3 { left: 579px; top: 644px; padding: 0 2px; line-height: 13px; }
.n4 { left: 556px; top: 657px; padding: 0 9px 0 6px; }
```
